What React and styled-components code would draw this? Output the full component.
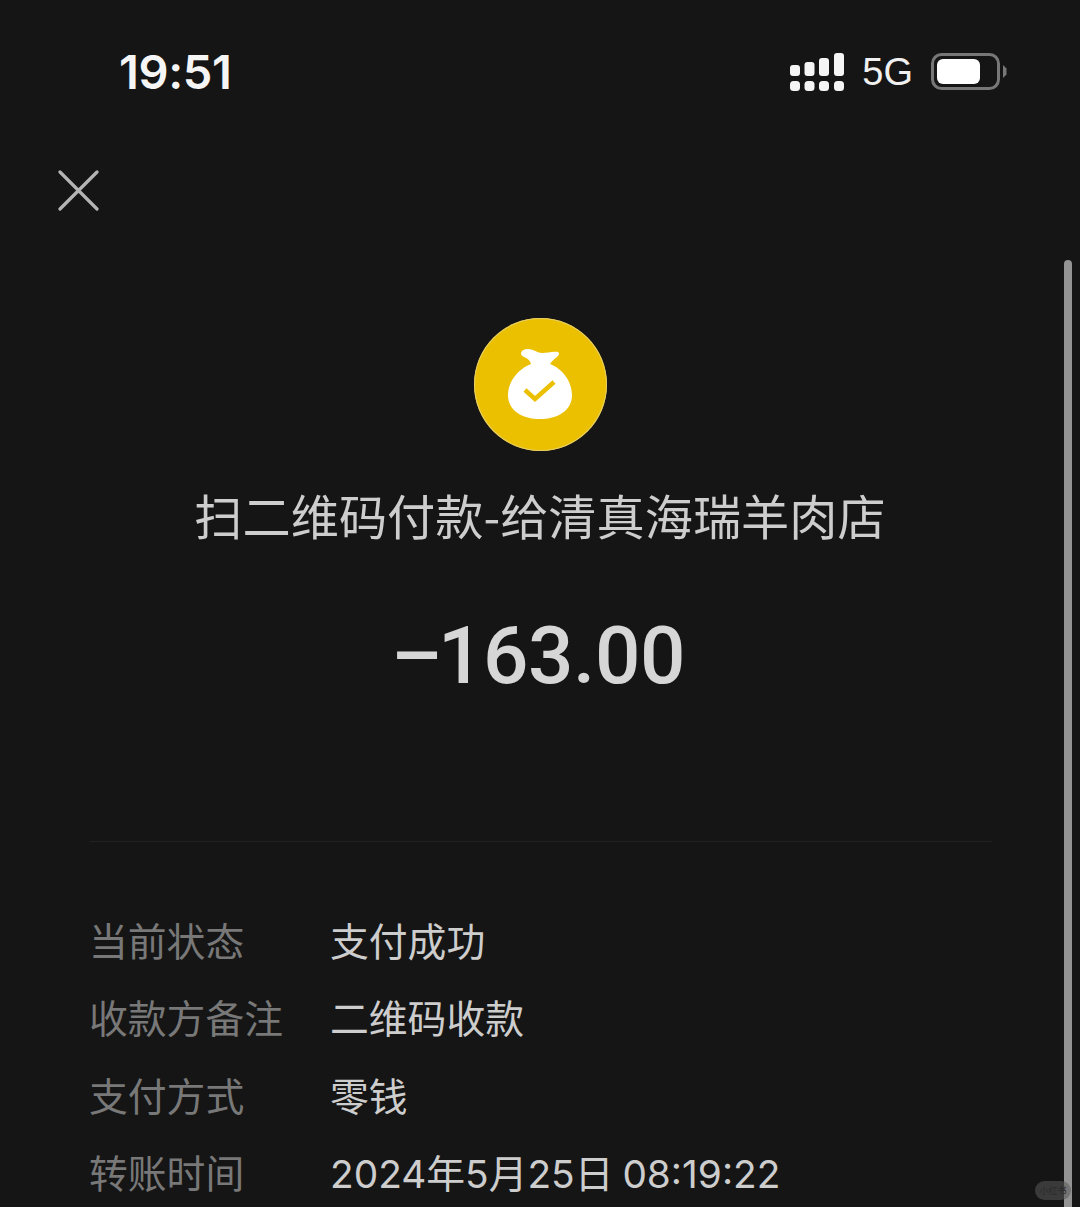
import React from "react";
import styled, { createGlobalStyle } from "styled-components";

const Global = createGlobalStyle`
  html, body { margin: 0; padding: 0; background: #151515; }
  body { font-family: "Noto Sans CJK SC", "Liberation Sans", sans-serif; }
`;

const Screen = styled.div`
  position: relative;
  width: 1080px;
  height: 1207px;
  overflow: hidden;
  background: #151515;
  display: flex;
  flex-direction: column;
`;

const StatusBar = styled.div`
  display: flex;
  align-items: center;
  justify-content: space-between;
  height: 72px;
  margin-top: 36px;
  padding: 0 73px 0 119px;
`;

const Clock = styled.div`
  font-family: Inter, "Liberation Sans", sans-serif;
  font-size: 47px;
  font-weight: 600;
  letter-spacing: -0.4px;
  color: #f5f5f5;
  margin-bottom: 2px;
`;

const StatusIcons = styled.div`
  display: flex;
  align-items: center;
  gap: 18px;
`;

const Network = styled.span`
  font-family: "Liberation Sans", sans-serif;
  font-size: 38px;
  color: #f0f0f0;
  line-height: 1;
`;

const CloseButton = styled.div`
  height: 40px;
  margin-top: 62px;
  padding-left: 58px;
`;

const Hero = styled.div`
  display: flex;
  flex-direction: column;
  align-items: center;
  margin-top: 108px;
`;

const Badge = styled.div`
  width: 133px;
  height: 133px;
  border-radius: 50%;
  background: #ebc000;
  box-shadow: inset 0 0 0 1px #e6cf6a;
  display: flex;
  align-items: center;
  justify-content: center;
`;

const Title = styled.div`
  margin-top: 31px;
  font-size: 48.2px;
  line-height: 64px;
  color: #cdcdcd;
  white-space: nowrap;
`;

const Amount = styled.div`
  margin-top: 65px;
  display: flex;
  align-items: baseline;
  font-family: "Roboto", "Liberation Sans", sans-serif;
  font-size: 80px;
  font-weight: 500;
  line-height: 90px;
  letter-spacing: -0.4px;
  color: #d6d6d6;
  transform: translateX(-2px);
`;

const Minus = styled.span`
  margin-right: -4px;
`;

const Divider = styled.div`
  height: 1px;
  margin: 140px 88px 0 90px;
  background: #212121;
`;

const Details = styled.div`
  display: flex;
  flex-direction: column;
  gap: 25.4px;
  margin-top: 71px;
  padding-left: 89px;
`;

const Row = styled.div`
  display: flex;
  height: 52px;
  align-items: baseline;
  font-size: 38.8px;
  line-height: 52px;
  white-space: nowrap;
`;

const Label = styled.span`
  width: 241px;
  flex: none;
  color: #787878;
`;

const Value = styled.span`
  font-family: Inter, "Noto Sans CJK SC", sans-serif;
  word-spacing: -2px;
  color: #cdcdcd;
`;

const Scrollbar = styled.div`
  position: absolute;
  left: 1064px;
  top: 260px;
  width: 8px;
  height: 960px;
  border-radius: 4px 4px 0 0;
  background: #939393;
`;

const Watermark = styled.div`
  position: absolute;
  left: 1035px;
  top: 1181px;
  width: 36px;
  height: 19px;
  border-radius: 10px;
  background: rgba(90, 90, 90, 0.55);
  color: #2a2a2a;
  font-size: 9px;
  line-height: 19px;
  text-align: center;
  white-space: nowrap;
`;

const Signal = () => (
  <svg width="54" height="38" viewBox="0 0 54 38" fill="#f5f5f5">
    <rect x="0" y="12" width="10" height="11" rx="3" />
    <rect x="14.500" y="9" width="10" height="14" rx="3" />
    <rect x="29" y="5" width="10" height="18" rx="3" />
    <rect x="44" y="0" width="10" height="23" rx="3" />
    <rect x="0" y="28" width="10" height="10" rx="3.500" />
    <rect x="14.500" y="28" width="10" height="10" rx="3.500" />
    <rect x="29" y="28" width="10" height="10" rx="3.500" />
    <rect x="44" y="28" width="10" height="10" rx="3.500" />
  </svg>
);

const Battery = () => (
  <svg width="76" height="38" viewBox="0 0 76 38">
    <rect x="1.500" y="1.500" width="66" height="34" rx="9" fill="none" stroke="#777" strokeWidth="3" />
    <rect x="6" y="6" width="43" height="25" rx="6" fill="#fff" />
    <path d="M72 12 L75.500 15.500 V21.500 L72 25 Z" fill="#777" />
  </svg>
);

const CloseIcon = () => (
  <svg width="42" height="42" viewBox="0 0 42 42" stroke="#b4b4b4" strokeWidth="3.200" fill="none" strokeLinecap="round">
    <path d="M2 2 L39 39 M39 2 L2 39" />
  </svg>
);

const BagIcon = () => (
  <svg width="66" height="72" viewBox="0 0 66 72">
    <path
      fill="#fff"
      d="M14 4 C15 0 21 -1 26 1 C29 2 32 4 35 4 C40 4 46 2 51 3 C53 4 52 6 50 8 C47 10 45 12 43 15 C56 20 65 33 65 46 C65 62 50 70 33 70 C16 70 1 62 1 46 C1 33 11 20 24 15 C23 11 20 9 17 8 C15 7 14 6 14 4 Z"
    />
    <path d="M18 41 L28 50 L47 33" fill="none" stroke="#ebc000" strokeWidth="4.500" strokeLinecap="butt" />
  </svg>
);

const rows = [
  ["当前状态", "支付成功"],
  ["收款方备注", "二维码收款"],
  ["支付方式", "零钱"],
  ["转账时间", "2024年5月25日 08:19:22"],
];

export default function App() {
  return (
    <Screen>
      <Global />
      <StatusBar>
        <Clock>19:51</Clock>
        <StatusIcons>
          <Signal />
          <Network>5G</Network>
          <Battery />
        </StatusIcons>
      </StatusBar>
      <CloseButton>
        <CloseIcon />
      </CloseButton>
      <Hero>
        <Badge>
          <BagIcon />
        </Badge>
        <Title>扫二维码付款-给清真海瑞羊肉店</Title>
        <Amount>
          <Minus>–</Minus>163.00
        </Amount>
      </Hero>
      <Divider />
      <Details>
        {rows.map(([k, v]) => (
          <Row key={k}>
            <Label>{k}</Label>
            <Value>{v}</Value>
          </Row>
        ))}
      </Details>
      <Scrollbar />
      <Watermark>小红书</Watermark>
    </Screen>
  );
}
